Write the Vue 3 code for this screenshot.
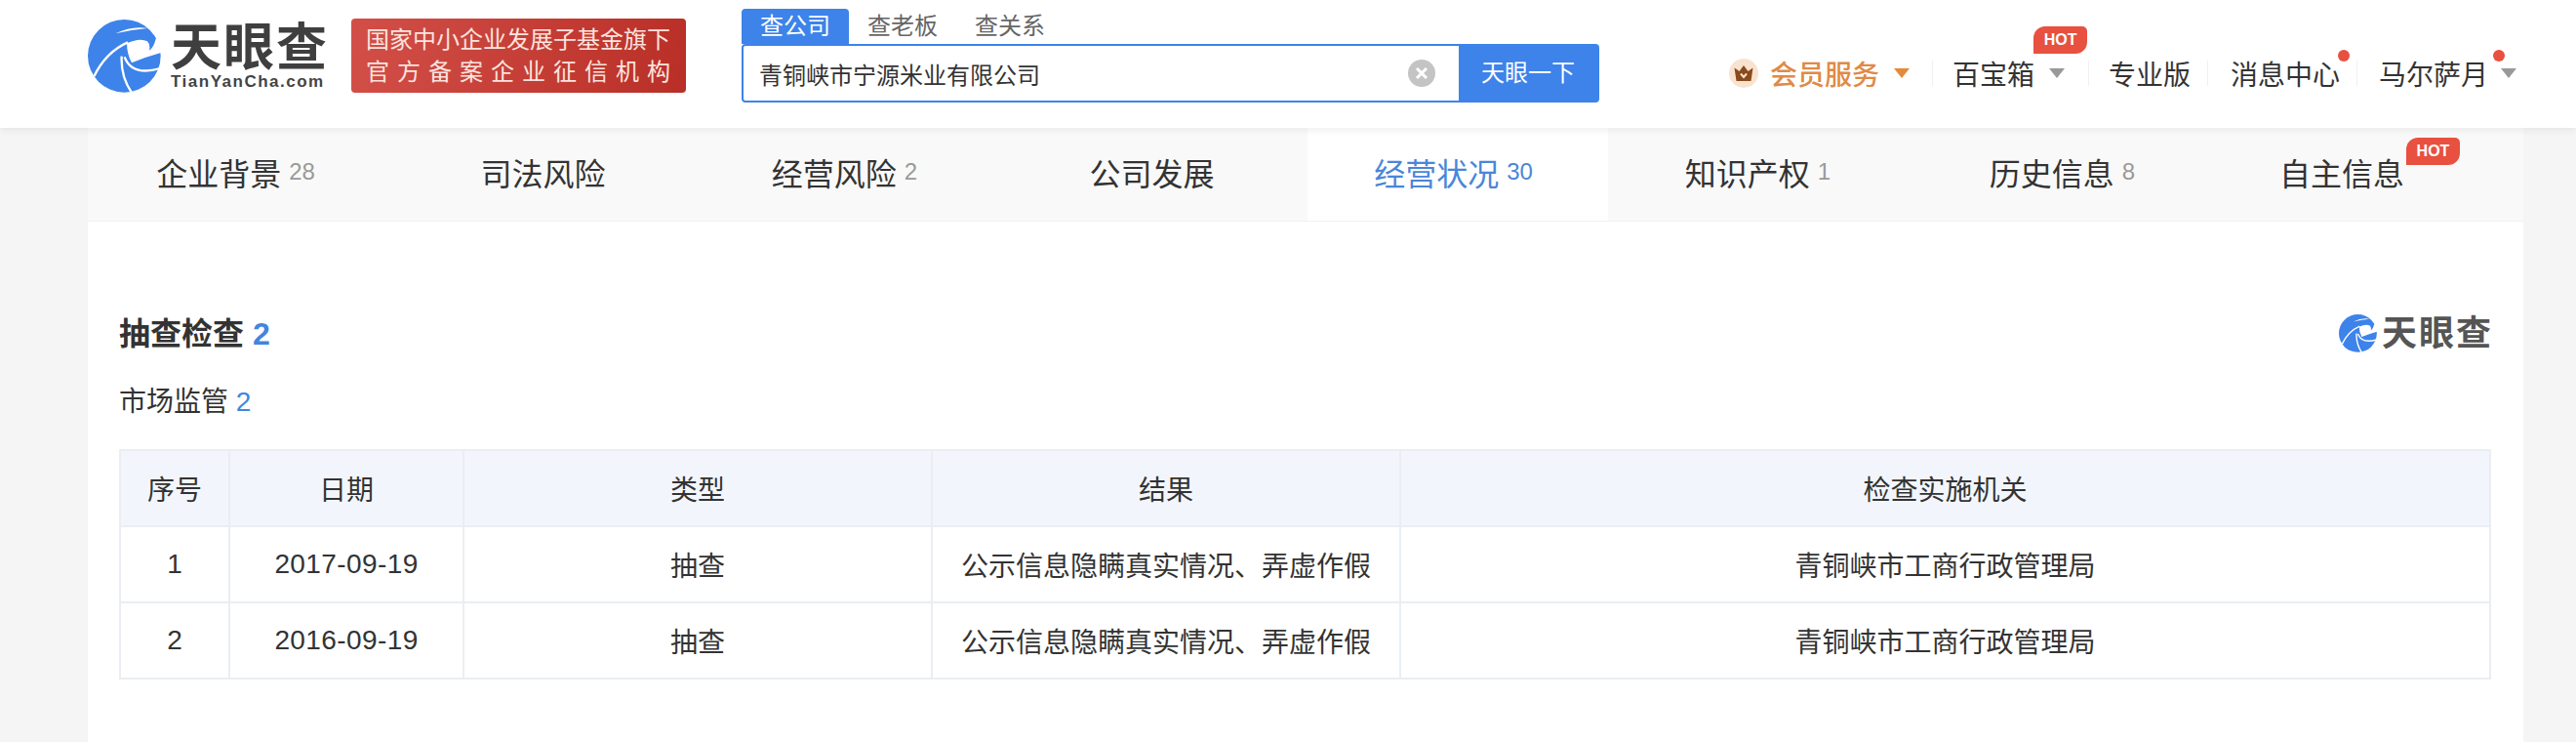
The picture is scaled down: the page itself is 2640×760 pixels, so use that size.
<script setup>
const tabs = [
  { label: '企业背景', count: 28 },
  { label: '司法风险' },
  { label: '经营风险', count: 2 },
  { label: '公司发展' },
  { label: '经营状况', count: 30, active: true },
  { label: '知识产权', count: 1 },
  { label: '历史信息', count: 8 },
  { label: '自主信息', hot: true }
]
const rows = [
  { no: 1, date: '2017-09-19', type: '抽查', result: '公示信息隐瞒真实情况、弄虚作假', org: '青铜峡市工商行政管理局' },
  { no: 2, date: '2016-09-19', type: '抽查', result: '公示信息隐瞒真实情况、弄虚作假', org: '青铜峡市工商行政管理局' }
]
</script>

<template>
  <div class="page">
    <header class="header">
      <div class="brand">
        <svg class="brand-mark" viewBox="15 15 225 225">
          <circle cx="127" cy="127" r="112" fill="#3d83ea" />
          <path d="M100 58Q150 34 198 42Q150 46 100 58Z" fill="#fff" />
          <path d="M135 88Q175 70 198 82Q208 92 204 110Q218 100 224 74L245 74L245 116Q200 128 150 148Q135 120 135 88Z" fill="#fff" />
          <path d="M34 190Q70 115 138 85" fill="none" stroke="#fff" stroke-width="7" />
          <path d="M128 130Q150 190 238 165" fill="none" stroke="#fff" stroke-width="7" />
          <path d="M119 128Q116 190 150 240" fill="none" stroke="#fff" stroke-width="7" />
        </svg>
        <div class="brand-text">
          <div class="brand-cn">天眼查</div>
          <div class="brand-en">TianYanCha.com</div>
        </div>
      </div>
      <div class="banner">
        <div class="banner-line">国家中小企业发展子基金旗下</div>
        <div class="banner-line spread"><span v-for="c in '官方备案企业征信机构'" :key="c">{{ c }}</span></div>
      </div>
      <div class="search">
        <div class="search-tabs">
          <span class="search-tab on">查公司</span>
          <span class="search-tab">查老板</span>
          <span class="search-tab">查关系</span>
        </div>
        <div class="search-box">
          <span class="search-text">青铜峡市宁源米业有限公司</span>
          <svg class="clear" viewBox="0 0 28 28">
            <circle cx="14" cy="14" r="14" fill="#c4c4c4" />
            <path d="M9 9L19 19M19 9L9 19" stroke="#fff" stroke-width="3" />
          </svg>
          <span class="search-btn">天眼一下</span>
        </div>
      </div>
      <nav class="nav">
        <div class="item vip">
          <svg class="crown" viewBox="0 0 30 30">
            <circle cx="15" cy="15" r="15" fill="#f8e3d0" />
            <path d="M5.5 9.5L10.5 13L15 7L19.5 13L24.5 9.5L22.5 23H7.5Z" fill="#8a4b1c" />
            <path d="M12 15.5L15 19L18 15.5" fill="none" stroke="#f8e3d0" stroke-width="2" />
          </svg>
          <span class="vip-text">会员服务</span>
          <i class="arrow orange"></i>
        </div>
        <i class="rule"></i>
        <div class="item box">
          <span>百宝箱</span>
          <span class="hot nav-hot">HOT</span>
          <i class="arrow"></i>
        </div>
        <i class="rule"></i>
        <div class="item pro">专业版</div>
        <i class="rule"></i>
        <div class="item msg"><span>消息中心</span><i class="dot msg-dot"></i></div>
        <i class="rule"></i>
        <div class="item user">
          <span>马尔萨月</span><i class="dot user-dot"></i>
          <i class="arrow"></i>
        </div>
      </nav>
    </header>

    <main class="card">
      <div class="tabs">
        <div v-for="t in tabs" :key="t.label" class="tab" :class="{ active: t.active }">
          <span>{{ t.label }}</span>
          <span v-if="t.count" class="count">{{ t.count }}</span>
          <span v-if="t.hot" class="hot tab-hot">HOT</span>
        </div>
      </div>
      <section class="content">
        <div class="title-row">
          <h2 class="title">抽查检查 <span class="blue">2</span></h2>
          <div class="mini-brand">
            <svg class="mini-mark" viewBox="15 15 225 225">
              <circle cx="127" cy="127" r="112" fill="#3d83ea" />
              <path d="M100 58Q150 34 198 42Q150 46 100 58Z" fill="#fff" />
              <path d="M135 88Q175 70 198 82Q208 92 204 110Q218 100 224 74L245 74L245 116Q200 128 150 148Q135 120 135 88Z" fill="#fff" />
              <path d="M34 190Q70 115 138 85" fill="none" stroke="#fff" stroke-width="8" />
              <path d="M128 130Q150 190 238 165" fill="none" stroke="#fff" stroke-width="8" />
              <path d="M119 128Q116 190 150 240" fill="none" stroke="#fff" stroke-width="8" />
            </svg>
            <span class="mini-text">天眼查</span>
          </div>
        </div>
        <div class="sub">市场监管 <span class="blue">2</span></div>
        <table class="table">
          <colgroup>
            <col class="c1" /><col class="c2" /><col class="c3" /><col class="c4" /><col />
          </colgroup>
          <thead>
            <tr><th>序号</th><th>日期</th><th>类型</th><th>结果</th><th>检查实施机关</th></tr>
          </thead>
          <tbody>
            <tr v-for="r in rows" :key="r.no">
              <td>{{ r.no }}</td><td class="date">{{ r.date }}</td><td>{{ r.type }}</td><td>{{ r.result }}</td><td>{{ r.org }}</td>
            </tr>
          </tbody>
        </table>
      </section>
    </main>
  </div>
</template>

<style>
body { margin: 0; background: #f5f5f5; }
</style>

<style scoped>
.page {
  width: 2640px;
  height: 760px;
  overflow: hidden;
  background: #f5f5f5;
  color: #333;
  font-family: "Liberation Sans", "Noto Sans CJK SC", sans-serif;
}
.header {
  position: relative;
  z-index: 2;
  display: flex;
  align-items: flex-start;
  height: 131px;
  padding-left: 90px;
  box-sizing: border-box;
  background: #fff;
  box-shadow: 0 2px 8px rgba(0, 0, 0, .07);
}
.brand { display: flex; margin-top: 20px; }
.brand-mark { width: 75px; height: 75px; display: block; }
.brand-text { margin-left: 10px; width: 160px; }
.brand-cn {
  margin-top: 3px;
  font-size: 52px;
  line-height: 52px;
  font-weight: 700;
  color: #3f3f3f;
  letter-spacing: 2px;
  white-space: nowrap;
}
.brand-en {
  margin-top: 0;
  font-size: 17px;
  line-height: 18px;
  font-weight: 700;
  color: #444;
  letter-spacing: 1.5px;
  white-space: nowrap;
}
.banner {
  margin: 19px 0 0 25px;
  width: 343px;
  height: 76px;
  padding: 5px 16px 0 15px;
  box-sizing: border-box;
  border-radius: 4px;
  background: linear-gradient(100deg, #d24f48, #b92f27);
  color: #fbe3df;
  font-size: 24px;
}
.banner-line { line-height: 33px; white-space: nowrap; }
.spread { display: flex; justify-content: space-between; }
.search { margin: 9px 0 0 57px; width: 879px; }
.search-tabs { display: flex; height: 36px; }
.search-tab {
  padding: 0 19px;
  font-size: 24px;
  line-height: 36px;
  color: #666;
}
.search-tab.on { background: #3d83ea; color: #fff; border-radius: 4px 4px 0 0; }
.search-box {
  display: flex;
  align-items: center;
  height: 60px;
  box-sizing: border-box;
  border: 2px solid #3d83ea;
  border-radius: 4px;
  background: #fff;
}
.search-text { margin-left: 16px; font-size: 24px; color: #333; flex: 1; }
.clear { width: 28px; height: 28px; margin-right: 24px; }
.search-btn {
  width: 142px;
  align-self: stretch;
  background: #3d83ea;
  color: #fff;
  font-size: 24px;
  line-height: 56px;
  text-align: center;
}
.nav {
  display: flex;
  align-items: center;
  margin-left: 133px;
  height: 62px;
  margin-top: 44px;
  font-size: 28px;
  white-space: nowrap;
}
.item { position: relative; display: flex; align-items: center; }
.rule { width: 1px; height: 26px; background: #f0f0f0; }
.vip { padding-right: 23px; }
.crown { width: 30px; height: 30px; margin-right: 12px; }
.vip-text { color: #e08a45; font-weight: 500; }
.arrow {
  width: 0;
  height: 0;
  margin-left: 15px;
  border-left: 8px solid transparent;
  border-right: 8px solid transparent;
  border-top: 10px solid #999;
}
.arrow.orange { border-top-color: #e58a3c; }
.box { padding: 0 24px 0 20px; }
.pro { padding: 0 17px 0 20px; }
.msg { padding: 0 17px 0 23px; }
.user { padding-left: 22px; }
.user .arrow { margin-left: 13px; }
.hot {
  background: #e8503f;
  color: #fff;
  font-size: 16px;
  font-weight: 700;
  line-height: 28px;
  width: 55px;
  text-align: center;
  border-radius: 12px 5px 12px 0;
}
.nav-hot { position: absolute; left: 103px; top: -28px; }
.dot { position: absolute; width: 12px; height: 12px; border-radius: 50%; background: #e8503f; }
.msg-dot { left: 133px; top: -4px; }
.user-dot { left: 139px; top: -4px; }
.card {
  margin-left: 90px;
  width: 2496px;
  height: 629px;
  background: #fff;
}
.tabs {
  display: grid;
  grid-template-columns: repeat(8, 1fr);
  height: 96px;
  background: #f9f9f9;
  border-bottom: 1px solid #f1f1f1;
  box-sizing: border-box;
}
.tab {
  display: flex;
  align-items: center;
  justify-content: center;
  padding: 0 3px 6px 0;
  font-size: 32px;
  color: #333;
}
.tab.active { background: #fff; color: #4a86d8; margin: 0 2px; }
.count { margin: 0 6px 0 8px; font-size: 24px; color: #999; }
.active .count { color: #4a86d8; }
.tab-hot { align-self: flex-start; margin: 10px 0 0 2px; }
.content { padding: 95px 33px 0 32px; }
.title-row { display: flex; justify-content: space-between; align-items: center; height: 39px; }
.title { margin: 0 0 5px; font-size: 32px; font-weight: 700; color: #333; }
.blue { color: #4285e0; }
.mini-brand { display: flex; align-items: center; }
.mini-mark { width: 39px; height: 39px; }
.mini-text {
  margin-left: 5px;
  font-size: 36px;
  line-height: 39px;
  font-weight: 700;
  color: #555;
  letter-spacing: 2px;
  margin-right: -2px;
}
.sub { margin-top: 31px; font-size: 28px; line-height: 40px; }
.table {
  margin-top: 28px;
  width: 2431px;
  border-collapse: collapse;
  table-layout: fixed;
  font-size: 28px;
}
.c1 { width: 112px; }
.c2 { width: 240px; }
.c3 { width: 480px; }
.c4 { width: 480px; }
th, td {
  height: 78px;
  padding: 0;
  box-sizing: border-box;
  border: 2px solid #eaeef3;
  text-align: center;
  font-weight: 400;
  color: #333;
}
th { background: #f2f6fc; }
.date { letter-spacing: .4px; }
</style>
